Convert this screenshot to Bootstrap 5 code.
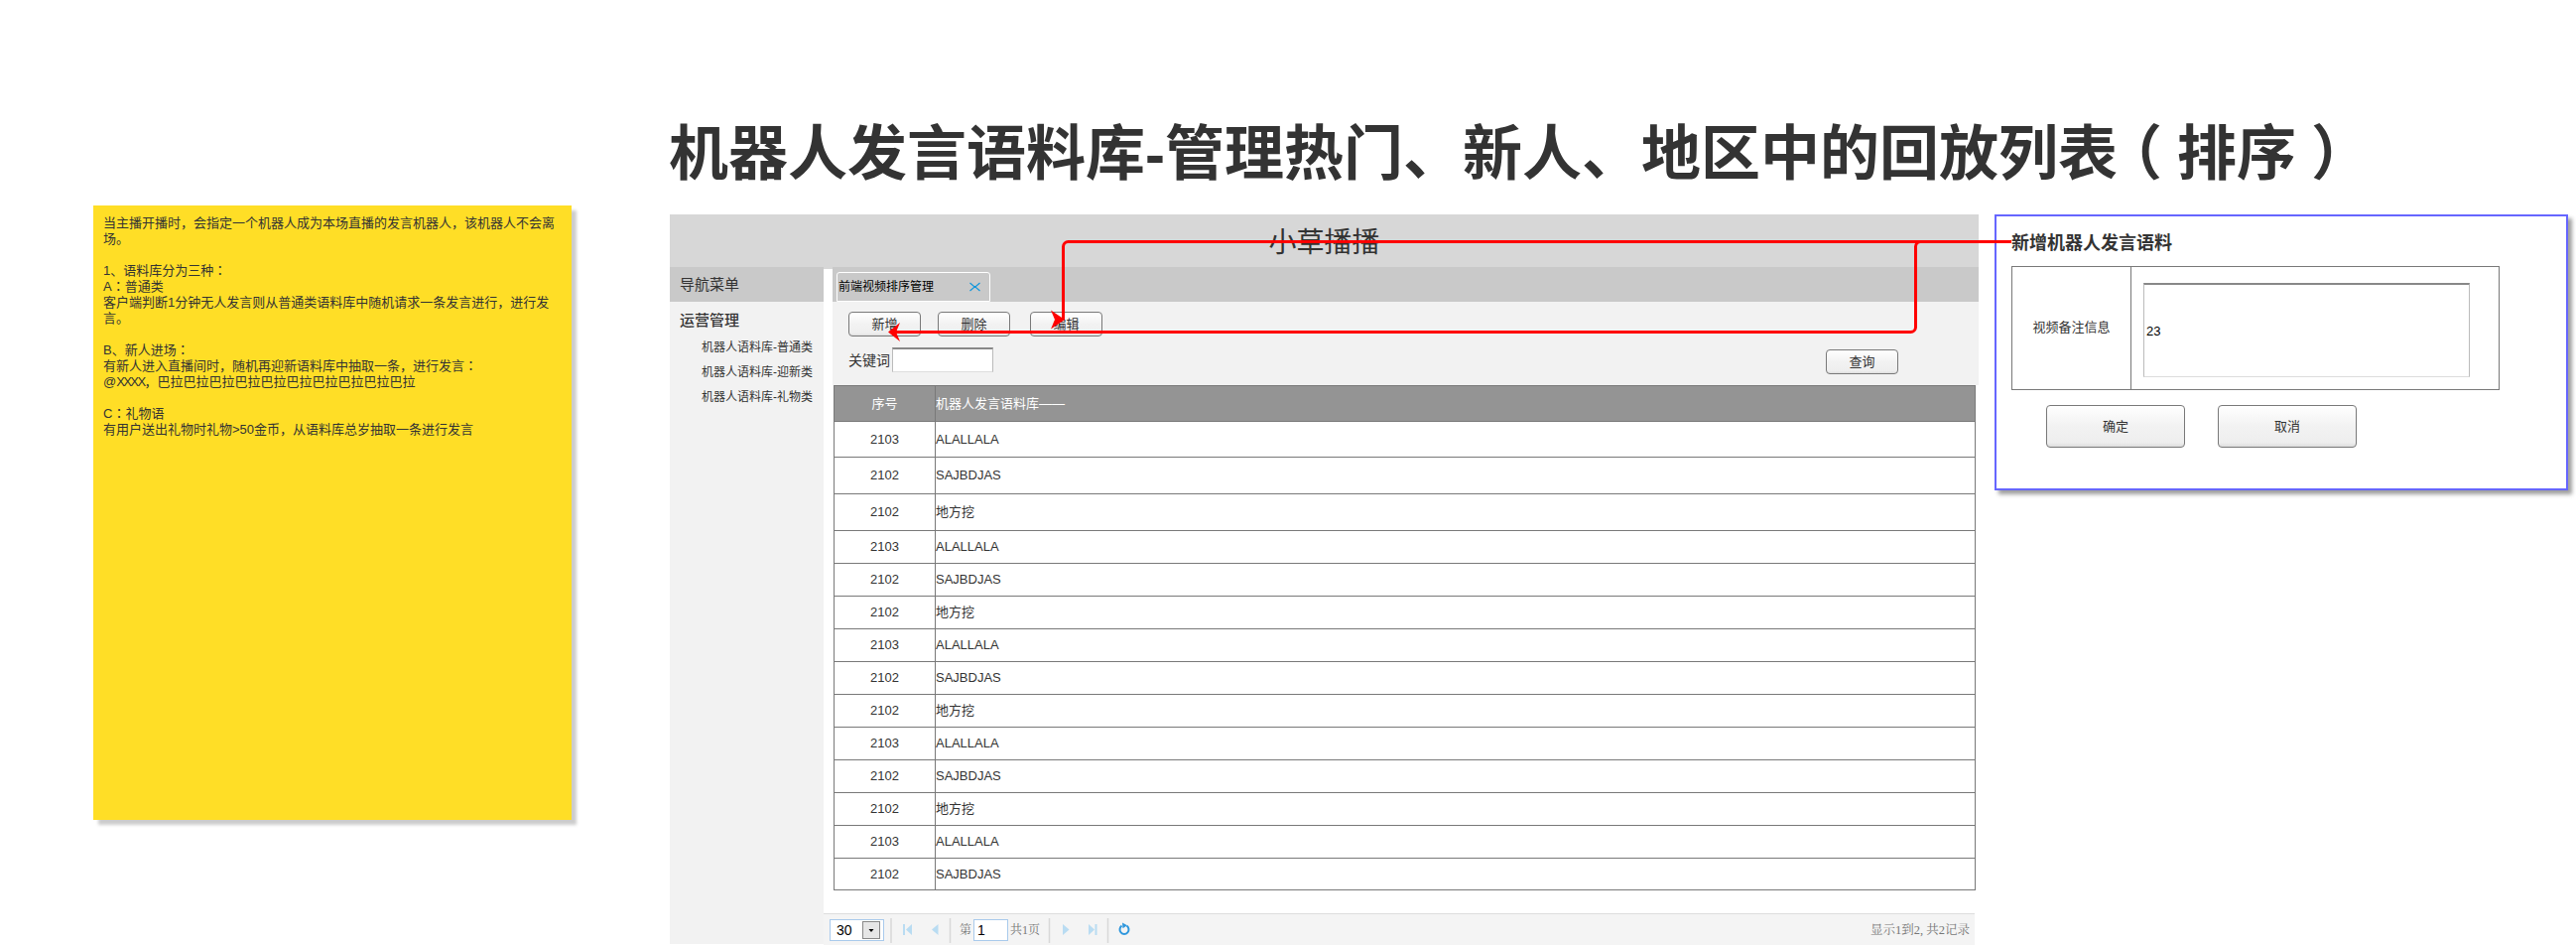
<!DOCTYPE html>
<html lang="zh-CN">
<head>
<meta charset="utf-8">
<title>机器人发言语料库</title>
<link href="https://cdn.jsdelivr.net/npm/bootstrap@5.3.0/dist/css/bootstrap.min.css" rel="stylesheet">
<style>
body{width:2596px;height:952px;overflow:hidden;background:#fff;color:#333;font:13px/16px "Liberation Sans","Noto Sans CJK SC",sans-serif}
.mid{font-family:"Noto Sans CJK JP",sans-serif;line-height:0}
.tight{letter-spacing:-1.6px}
.note{width:482px;height:619px;margin:207px 0 0 94px;padding:10px;background:#ffde26;box-shadow:5px 5px 3px rgba(0,0,0,.2);white-space:nowrap}
.main-col{width:1319px;height:952px;margin-left:99px}
.page-title{height:216px;padding-top:121px;margin-left:-1px;font-size:60px;line-height:70px;font-weight:700;white-space:nowrap}
.paren{display:inline-block;width:60px;text-align:center;font-feature-settings:"halt"}
.app-head{height:53px;background:#d7d7d7;font-size:28px;line-height:58px}
.side{width:155px;background:#f2f2f2;height:682px}
.side-head{height:35px;background:#c9c9c9;font-size:15px;padding-left:10px;line-height:35px}
.side h2{font-size:15px;line-height:18px;margin:0;padding:10px 0 0 10px;font-weight:500}
.side-links{padding-top:6px}
.side a{display:block;color:#000;font-size:12px;line-height:25px;padding-left:32px;text-decoration:none}
.gap-strip{width:9px;border-top:2px solid #d7d7d7}
.content{width:1164px}
.tabs{height:35px;background:#c9c9c9;padding:5px 0 0 4px}
.tab{width:155px;height:30px;border:1px solid #fff;border-radius:3px 3px 0 0;color:#000;font-size:12px;padding:0 9px 0 1px}
.tools{height:84px;background:#f2f2f2;padding:10px 81px 0 16px}
.wbtn{width:73px;height:25px;padding:0;border:1px solid #797979;border-radius:4px;background:linear-gradient(#fff,#f2f2f2 50%,#eee 90%,#ddd);color:#333;font:13px/23px "Liberation Sans","Noto Sans CJK SC",sans-serif}
.wbtn.big{width:140px;height:43px;line-height:41px}
.inset{background:#fff;border:1px solid #bbb;border-top:2px solid #888;border-bottom-color:#ddd;border-radius:0}
.grid-t{width:1151px;margin-left:1px;border-collapse:separate;border-spacing:0;border:solid #797979;border-width:1px 0 0 1px;table-layout:fixed}
.grid-t th,.grid-t td{height:33px;padding:0;border:solid #797979;border-width:0 1px 1px 0;line-height:16px;vertical-align:middle;font-weight:400}
.grid-t .n{width:102px;text-align:center}
.grid-t th{height:36px;background:#949494;color:#fff}
.grid-t .h36 td{height:36px}.grid-t .h37 td{height:37px}.grid-t .h32 td{height:32px}
.pager{width:1160px;height:32px;margin-top:23px;background:#f4f4f4;border-top:1px solid #ddd;color:#777;font:12px/16px "Liberation Serif","Noto Serif CJK SC","Noto Sans CJK SC",serif}
.pager .field{height:22px;border:1px solid #a9caec;background:#fff;color:#000;font:14px/20px "Liberation Sans",sans-serif}
.dialog-box{width:578px;height:278px;margin:216px 0 0 16px;border:2px solid #66f;box-shadow:4px 4px 4px rgba(0,0,0,.38);padding:16px 15px 0}
.dialog-box h1{font-size:18px;line-height:22px;font-weight:700;margin:0 0 12px;white-space:nowrap}
.form-t{width:492px;height:125px;border:1px solid #797979}
.form-t .lab{width:120px;border-right:1px solid #797979;padding-bottom:1px}
.wires{left:0;top:0}
</style>
</head>
<body class="position-relative d-flex align-items-start">
<aside class="note flex-shrink-0">当主播开播时，会指定一个机器人成为本场直播的发言机器人，该机器人不会离<br>场。<br><br>1、语料库分为三种<span class="mid" lang="ja">：</span><br>A<span class="mid" lang="ja">：</span>普通类<br>客户端判断1分钟无人发言则从普通类语料库中随机请求一条发言进行，进行发<br>言。<br><br>B、新人进场<span class="mid" lang="ja">：</span><br>有新人进入直播间时，随机再迎新语料库中抽取一条，进行发言<span class="mid" lang="ja">：</span><br>@<span class="tight">XXXX</span>，巴拉巴拉巴拉巴拉巴拉巴拉巴拉巴拉巴拉巴拉<br><br>C<span class="mid" lang="ja">：</span>礼物语<br>有用户送出礼物时礼物&gt;50金币，从语料库总岁抽取一条进行发言</aside>

<main class="main-col flex-shrink-0">
  <div class="page-title">机器人发言语料库-管理热门、新人、地区中的回放列表<span class="paren">（</span>排序<span class="paren">）</span></div>
  <header class="app-head text-center">小草播播</header>
  <div class="d-flex">
    <nav class="side">
      <div class="side-head">导航菜单</div>
      <h2>运营管理</h2>
      <div class="side-links">
        <a>机器人语料库-普通类</a><a>机器人语料库-迎新类</a><a>机器人语料库-礼物类</a>
      </div>
    </nav>
    <div class="content">
      <div class="d-flex">
        <div class="gap-strip flex-shrink-0"></div>
        <div class="flex-grow-1">
          <div class="tabs"><div class="tab d-flex align-items-center justify-content-between"><span>前端视频排序管理</span>
            <svg width="11" height="10" viewBox="0 0 11 10" fill="none" stroke="#1296db" stroke-width="1.2"><path d="M.5 1l4 3.500h2l4-3.500M.5 9l4-3.500h2l4 3.500"/></svg></div></div>
          <div class="tools">
            <div class="d-flex" style="gap:17px"><button class="wbtn">新增</button><button class="wbtn">删除</button><button class="wbtn" style="margin-left:3px">编辑</button></div>
            <div class="d-flex pt-2" style="margin-top:3px">
              <label style="font-size:14px;line-height:26px;width:44px">关键词</label>
              <input class="inset p-0" style="width:102px;height:25px">
              <button class="wbtn ms-auto" style="margin-top:2px">查询</button>
            </div>
          </div>
          <table class="grid-t">
            <tr><th class="n">序号</th><th>机器人发言语料库——</th></tr>
            <tr class="h36"><td class="n">2103</td><td>ALALLALA</td></tr>
            <tr class="h37"><td class="n">2102</td><td>SAJBDJAS</td></tr>
            <tr class="h37"><td class="n">2102</td><td>地方挖</td></tr>
            <tr><td class="n">2103</td><td>ALALLALA</td></tr>
            <tr><td class="n">2102</td><td>SAJBDJAS</td></tr>
            <tr><td class="n">2102</td><td>地方挖</td></tr>
            <tr><td class="n">2103</td><td>ALALLALA</td></tr>
            <tr><td class="n">2102</td><td>SAJBDJAS</td></tr>
            <tr><td class="n">2102</td><td>地方挖</td></tr>
            <tr><td class="n">2103</td><td>ALALLALA</td></tr>
            <tr><td class="n">2102</td><td>SAJBDJAS</td></tr>
            <tr><td class="n">2102</td><td>地方挖</td></tr>
            <tr><td class="n">2103</td><td>ALALLALA</td></tr>
            <tr class="h32"><td class="n">2102</td><td>SAJBDJAS</td></tr>
          </table>
        </div>
      </div>
      <footer class="pager d-flex align-items-center">
        <div class="field d-flex justify-content-between align-items-center" style="width:55px;margin-left:6px;padding:0 3px 0 6px"><span>30</span>
          <svg width="18" height="18"><rect x=".5" y=".5" width="17" height="17" fill="#e6e6e6" stroke="#888"/><path d="M6.500 8h5L9 11z" fill="#000"/></svg></div>
        <svg width="76" height="26" viewBox="891 0 76 26"><path d="M898 1v25M957.500 1v25" stroke="#d8d8d8" fill="none" stroke-width="1.500"/><path d="M910 7h2v11h-2zM919 7v11l-6-5.500zM945.500 7v11l-6.500-5.500z" fill="#b9dcf2"/></svg>
        <span style="width:14px">第</span>
        <div class="field" style="width:35px;padding-left:3px">1</div>
        <span style="margin-left:2px;width:31px;white-space:nowrap">共1页</span>
        <svg width="92" height="26" viewBox="1049 0 92 26"><path d="M1057.500 1v25M1116.500 1v25" stroke="#d8d8d8" fill="none" stroke-width="1.500"/><path d="M1071 7v11l6.500-5.500zM1097 7v11l6-5.500zM1103.500 7h2v11h-2z" fill="#b9dcf2"/><path d="M1130.500 8.700a4.500 4.500 0 1 0 5 0" fill="none" stroke="#2f97dd" stroke-width="2"/><path d="M1131 5.500l5 2.800-4.500 3z" fill="#2f97dd"/></svg>
        <span class="ms-auto" style="font-size:12.5px;padding-right:5px">显示1到2, 共2记录</span>
      </footer>
    </div>
  </div>
</main>

<section class="dialog-box flex-shrink-0">
  <h1>新增机器人发言语料</h1>
  <div class="form-t d-flex">
    <div class="lab d-flex align-items-center justify-content-center">视频备注信息</div>
    <input class="inset" value="23" style="width:329px;height:95px;margin:16px 0 0 12px;padding:0 2px;color:#000">
  </div>
  <div class="d-flex" style="gap:33px;margin:15px 0 0 35px"><button class="wbtn big">确定</button><button class="wbtn big">取消</button></div>
</section>

<!-- connectors from the dialog title to the toolbar buttons -->
<svg class="wires position-absolute pe-none" width="2596" height="952" fill="none" stroke="#f00" stroke-width="3">
  <path d="M2027 243.500H1076.500a5 5 0 0 0-5 5V322"/>
  <path d="M1935.500 243.500a5 5 0 0 0-5 5V329.500a5 5 0 0 1-5 5H903"/>
  <path d="M1073 322l-14-9.500 4 9.500-4 9.500zM895 334.500l12-9.500-4 9.500 4 9.500z" fill="#f00" stroke="none"/>
</svg>
<script src="https://cdn.jsdelivr.net/npm/bootstrap@5.3.0/dist/js/bootstrap.bundle.min.js"></script>
</body>
</html>
